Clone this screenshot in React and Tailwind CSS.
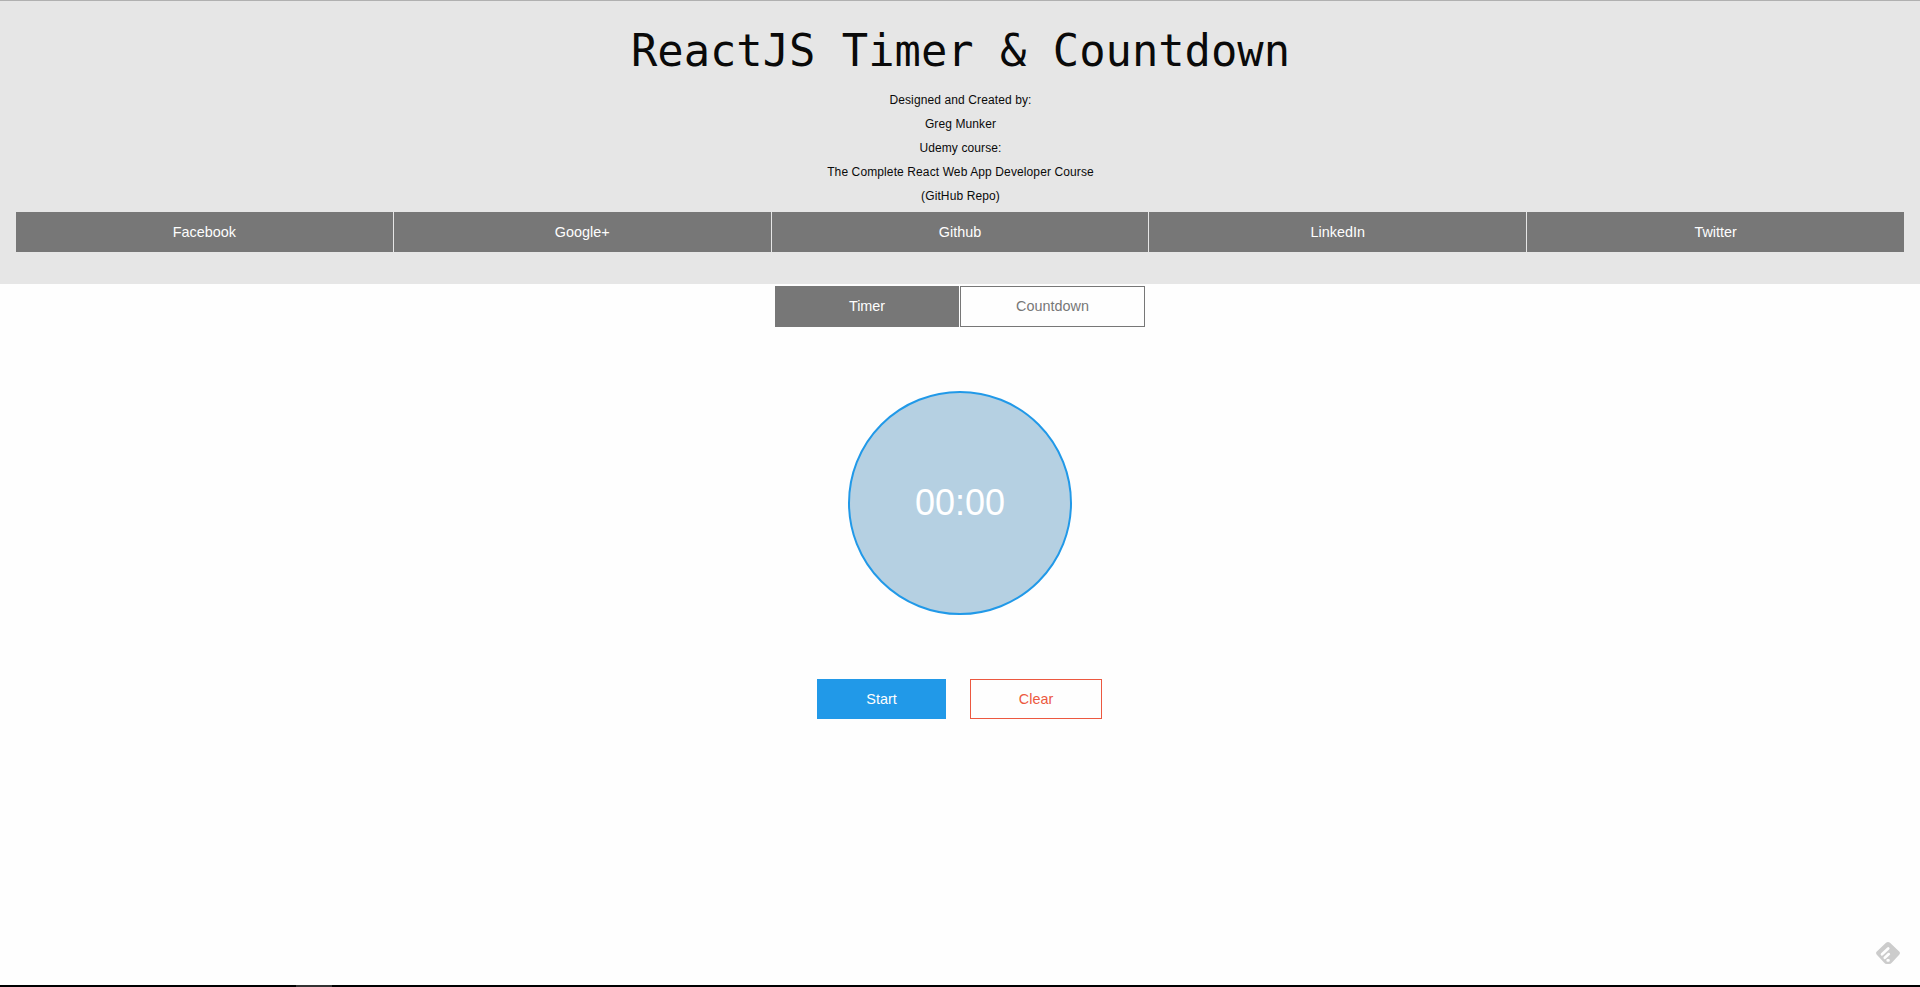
const links = ['Facebook', 'Google+', 'Github', 'LinkedIn', 'Twitter'];
const credits = [
  'Designed and Created by:',
  'Greg Munker',
  'Udemy course:',
  'The Complete React Web App Developer Course',
  '(GitHub Repo)',
];

function Header() {
  return (
    <header className="h-[284px] shrink-0 border-t border-[#b0b0b0] bg-[#e6e6e6] px-4 text-center text-[#0a0a0a]">
      <h1 className="mt-4 h-[71px] whitespace-pre pl-px font-['DejaVu_Sans_Mono',monospace] text-[43.8px] leading-[67px]">ReactJS Timer &amp; Countdown</h1>
      {credits.map((line) => (
        <p key={line} className="h-6 pl-px text-xs leading-6 tracking-[0.11px]">{line}</p>
      ))}
      <nav className="mt-[4px] grid grid-cols-5 gap-px">
        {links.map((name) => (
          <a key={name} className="flex h-10 items-center justify-center bg-[#777777] text-[14.4px] leading-none text-[#fefefe]">{name}</a>
        ))}
      </nav>
    </header>
  );
}

export default function App() {
  return (
    <div className="relative flex h-[987px] w-full flex-col overflow-hidden bg-[#fefefe] font-['Liberation_Sans',Arial,sans-serif]">
      <Header />
      <main className="flex flex-1 flex-col items-center">
        <div className="mt-0.5 flex gap-px text-[14.4px] leading-none">
          <button className="h-[41px] w-[184px] bg-[#777777] text-[#fefefe]">Timer</button>
          <button className="h-[41px] w-[185px] border border-[#777777] text-[#777777]">Countdown</button>
        </div>
        <div className="mt-16 flex size-56 items-center justify-center rounded-full border-2 border-[#2199e8] bg-[#b5d0e2] text-4xl text-white">00:00</div>
        <div className="mt-16 flex gap-6 pr-px text-[14.4px] leading-none">
          <button className="h-10 w-[129px] bg-[#2199e8] text-[#fefefe]">Start</button>
          <button className="h-10 w-[132px] border border-[#ec5840] text-[#ec5840]">Clear</button>
        </div>
      </main>
      <footer className="flex h-0.5 bg-black pl-[296px]">
        <div className="w-9 bg-[#333333]" />
      </footer>
      <svg className="absolute bottom-[23px] right-5 h-[22px] w-6" viewBox="0 0 24 22">
        <path d="M10 .8Q12-.8 14 .8L23.2 9.6Q24.7 11 23.2 12.8L16 20.5Q14.8 22 13 22H11Q9.2 22 8 20.5L.8 12.8Q-.7 11 .8 9.6Z" fill="#cccccc" />
        <path d="M6 12.3L12.2 6.5M8.8 15.8L12.8 12.1M11.7 18.4H12.5" fill="none" stroke="#fefefe" strokeWidth="2.7" strokeLinecap="round" />
      </svg>
    </div>
  );
}
